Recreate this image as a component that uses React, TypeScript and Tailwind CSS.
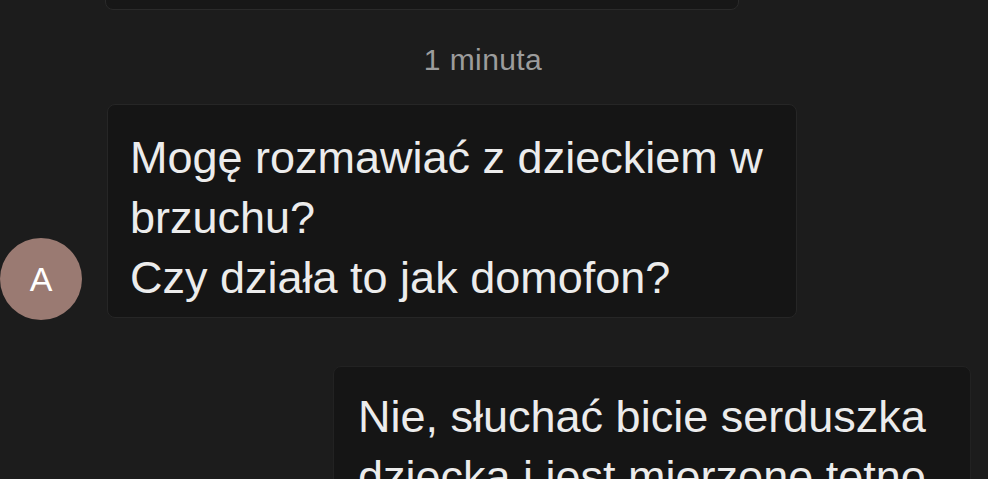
import React from "react";

const font = { fontFamily: '"Liberation Sans", Arial, sans-serif' };

export default function App() {
	return (
		<div
			className="h-[479px] w-[988px] overflow-hidden bg-[#1c1c1c] text-[#ececec]"
			style={font}
		>
			{/* previous bubble, mostly scrolled off */}
			<div className="-mt-[50px] ml-[105px] h-[60px] w-[634px] rounded-lg border border-[#2a2a2a] bg-[#171717]" />

			<div className="mt-[33px] flex justify-center pr-[22px]">
				<span className="text-[30px] leading-[34px] tracking-[0.4px] text-[#9c9c9c]">1 minuta</span>
			</div>

			<div className="mt-[27px] flex items-end">
				<div className="-mb-[2px] flex h-[82px] w-[82px] items-center justify-center rounded-full bg-[#9a7a72] text-[34px] text-white">
					A
				</div>
				<div className="ml-[25px] w-[690px] rounded-lg border border-[#262626] bg-[#151515] pb-[9px] pl-[22px] pt-[23px] text-[45px] leading-[60px]">
					<div>Mogę rozmawiać z dzieckiem w</div>
					<div>brzuchu?</div>
					<div>Czy działa to jak domofon?</div>
				</div>
			</div>

			<div className="mt-[48px] ml-[333px] w-[638px] rounded-lg border border-[#222222] bg-[#151515] pl-[24px] pt-[20px] text-[45px] leading-[60px]">
				<div>Nie, słuchać bicie serduszka</div>
				<div>dziecka i jest mierzone tętno</div>
			</div>
		</div>
	);
}
